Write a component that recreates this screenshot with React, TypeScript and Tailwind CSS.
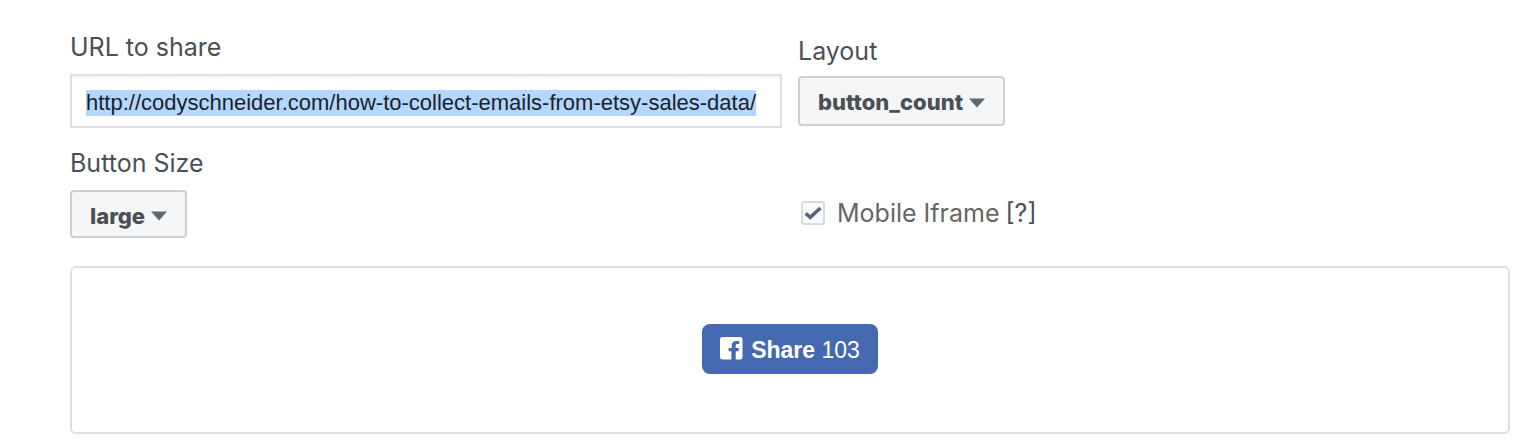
import { useEffect, useRef } from "react";
import type { ReactNode } from "react";

type SelectProps = {
  id: string;
  options: string[];
  value: string;
  className: string;
};

function Label({ htmlFor, children }: { htmlFor: string; children: ReactNode }) {
  return (
    <label htmlFor={htmlFor} className="block text-[25px] leading-8 text-[#4b4f56]">
      {children}
    </label>
  );
}

function Select({ id, options, value, className }: SelectProps) {
  return (
    <div className="relative w-fit">
      <select
        id={id}
        defaultValue={value}
        className={`block field-sizing-content appearance-none rounded-[4px] border-2 border-[#ccd0d5] bg-[#f5f6f7] pr-10 pl-[18px] text-[22px] leading-7 font-extrabold text-[#4b4f56] ${className}`}
      >
        {options.map((option) => (
          <option key={option}>{option}</option>
        ))}
      </select>
      <svg
        viewBox="0 0 16 9"
        className="pointer-events-none absolute inset-y-0 right-5 mt-0.5 h-full w-4 fill-[#606770]"
        aria-hidden="true"
      >
        <path d="M0 0h16L8 9z" />
      </svg>
    </div>
  );
}

export default function App() {
  const urlRef = useRef<HTMLInputElement>(null);

  useEffect(() => {
    urlRef.current?.focus();
    urlRef.current?.select();
  }, []);

  return (
    <main className="bg-white pt-[31px] pr-[18px] pb-3 pl-[70px] font-['Inter',sans-serif]">
      <div className="grid grid-cols-2 gap-x-4 gap-y-[19px]">
        <div className="flex flex-col gap-[11px]">
          <Label htmlFor="url">URL to share</Label>
          <input
            ref={urlRef}
            id="url"
            type="text"
            defaultValue="http://codyschneider.com/how-to-collect-emails-from-etsy-sales-data/"
            className="block h-[54px] w-full border-2 border-[#dddfe2] bg-white px-[14px] pt-[3px] font-['Liberation_Sans',Arial,sans-serif] text-[22px] leading-6 text-[#1d2129] shadow-[inset_0_2px_0_#f3f3f5] outline-none selection:bg-[#b3d7ff] selection:text-[#1d2129]"
          />
        </div>
        <div className="flex flex-col gap-[9px] pt-1">
          <Label htmlFor="layout">Layout</Label>
          <Select
            id="layout"
            value="button_count"
            options={["box_count", "button_count", "button"]}
            className="h-[50px] pt-0.5"
          />
        </div>
        <div className="flex flex-col gap-[11px]">
          <Label htmlFor="size">Button Size</Label>
          <Select id="size" value="large" options={["small", "large"]} className="h-12 pt-[3px]" />
        </div>
        <div className="flex items-center gap-1.5 pt-10 pl-[3px] text-[25px] leading-8">
          <label className="flex items-center gap-3 text-[#666666]">
            <span className="relative block size-6">
              <input
                type="checkbox"
                defaultChecked
                className="block size-6 appearance-none rounded-[3px] border-2 border-[#d8dadd] bg-[#fafbfc]"
              />
              <svg
                viewBox="0 0 24 24"
                className="pointer-events-none absolute inset-0 size-6 fill-none stroke-[#5d6578] stroke-[3.6]"
                aria-hidden="true"
              >
                <path d="M4.700 12.300L9.200 16.300L19.500 7" />
              </svg>
            </span>
            Mobile Iframe
          </label>
          <a href="#mobile-iframe" className="text-[#4b4f56]">
            [?]
          </a>
        </div>
      </div>
      <section className="mt-7 flex h-[168px] items-center justify-center rounded-md border-2 border-[#dddfe2] pb-0.5">
        <button
          type="button"
          className="flex h-[50px] items-center gap-2 rounded-lg bg-[#4469b0] pr-[18px] pl-[17px] font-['Liberation_Sans',Arial,sans-serif] text-[23px] leading-7 text-white"
        >
          <svg viewBox="0 0 24 24" className="size-6 fill-white" aria-hidden="true">
            <path d="M3.500 0h17.500a2.500 2.500 0 0 1 2.500 2.500v17.500a2.500 2.500 0 0 1-2.500 2.500h-4.300v-8.300h2.700l.5-3.300h-3.200V8.800c0-1.200.5-1.700 1.700-1.700h1.800V4.100h-2.700c-3 0-4.700 1.700-4.700 4.500v2.300H9.600v3.300h2.800v8.300H3.500a2.500 2.500 0 0 1-2.500-2.500V2.500a2.500 2.500 0 0 1 2.500-2.500z" />
          </svg>
          <span className="pt-0.5">
            <strong className="font-bold">Share</strong> 103
          </span>
        </button>
      </section>
    </main>
  );
}
